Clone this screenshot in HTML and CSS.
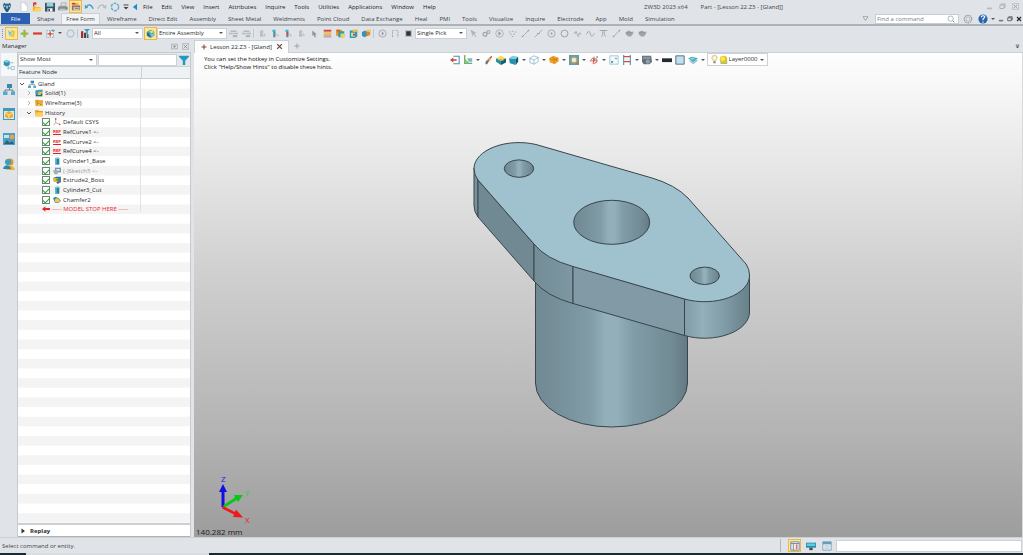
FILE: index.html
```html
<!DOCTYPE html>
<html lang="en">
<head>
<meta charset="utf-8">
<title>ZW3D 2023 x64 - Part - [Lesson 22.Z3 - [Gland]]</title>
<link rel="stylesheet" href="styles.css">
</head>
<body>
<svg class="defs" aria-hidden="true">
  <symbol id="logo" viewBox="0 0 12 12"><path d="M1 3l2-2 2 2 1-2 1 2 2-2 2 2-1 4-3 5H5L2 7z" fill="#245a78"/><path d="M2 3l2 2-2 1M10 3L8 5l2 1M5 5h2L6 8z" stroke="#bfe0ee" fill="#5aa5c4" stroke-width=".8"/></symbol>
  <symbol id="new" viewBox="0 0 12 12"><path d="M2.500 .5h5l2.500 3v8h-7.500z" fill="#fff" stroke="#b9bfc4" stroke-width=".7"/><path d="M7.500 .5v3H10" fill="none" stroke="#b9bfc4" stroke-width=".7"/></symbol>
  <symbol id="open" viewBox="0 0 12 12"><path d="M1 5h3l1 1h5v5H1z" fill="#f3b52c"/><path d="M2 11l2-4h8l-2 4z" fill="#ffd35c"/><path d="M2 5V2h3" stroke="#d23c2c" stroke-width="1.600" fill="none"/><path d="M1 1l4-1v4z" fill="#d23c2c"/></symbol>
  <symbol id="save" viewBox="0 0 12 12"><path d="M0 1h12v10.500H0z" fill="#38535f"/><path d="M2 1h8v4.500H2z" fill="#8fd0e2"/><path d="M3 7.500h6v4H3z" fill="#f4f7f8"/><path d="M4 8h2v3H4z" fill="#38535f"/></symbol>
  <symbol id="print" viewBox="0 0 12 12"><path d="M4 1h6l-1 4H3z" fill="#ddd" stroke="#888" stroke-width=".6"/><path d="M1 5h10l1 3-2 2H0V7z" fill="#858b90"/><path d="M2 8h7v2.500H2z" fill="#c3c7ca"/></symbol>
  <symbol id="saveall" viewBox="0 0 12 12"><path d="M1 4h10v6H1z" fill="#8f7468"/><path d="M3 1h6v3H3z" fill="#e8b04a"/><path d="M1 1h4v2H1z" fill="#d7392f"/><path d="M3 6h7v4H3z" fill="#d4c4b0"/><path d="M5 7h4v1H5z" fill="#7b5a50"/></symbol>
  <symbol id="undo" viewBox="0 0 12 12"><path d="M3 6c2-4 6-3 8 2" fill="none" stroke="#35a3c4" stroke-width="1.600"/><path d="M1 8V3l4 4z" fill="#35a3c4"/></symbol>
  <symbol id="redo" viewBox="0 0 12 12"><path d="M9 6C7 2 3 3 1 8" fill="none" stroke="#b4babf" stroke-width="1.500"/><path d="M11 8V3L7 7z" fill="#b4babf"/></symbol>
  <symbol id="ring" viewBox="0 0 12 12"><circle cx="6" cy="6" r="4.400" fill="none" stroke="#65aeca" stroke-width="1.800" stroke-dasharray="3.400 1.200"/></symbol>
  <symbol id="ring2" viewBox="0 0 12 12"><path d="M3.500 1.500h5L11 6l-2.500 4.500h-5L1 6z" fill="none" stroke="#8db9cc" stroke-width="1.200"/></symbol>
  <symbol id="tri" viewBox="0 0 12 12"><path d="M8.500 2v8L3.500 6z" fill="#168fca"/></symbol>
  <symbol id="drop" viewBox="0 0 12 12"><path d="M3 3h6v1.200H3zM3 6h6L6 9z" fill="#444"/></symbol>
  <symbol id="cursor" viewBox="0 0 12 12"><path d="M6 1l5 2-2 8-5-1z" fill="#e9c92d"/><path d="M1 1l7 5-3 1-2 4z" fill="#6fc0d2" stroke="#e9f5f8" stroke-width=".6"/></symbol>
  <symbol id="plus" viewBox="0 0 12 12"><path d="M4.500 1h3v3.500H11v3H7.500V11h-3V7.500H1v-3h3.500z" fill="#94b93a"/></symbol>
  <symbol id="minus" viewBox="0 0 12 12"><path d="M0 4.500h12v3H0z" fill="#d8402f"/></symbol>
  <symbol id="pickbox" viewBox="0 0 12 12"><path d="M1 2h9v9H1z" fill="#eef4f7" stroke="#6696a8" stroke-width=".9" stroke-dasharray="2 1"/><path d="M5.500 3v7M2 6.500h7" stroke="#d8402f" stroke-width="1.600"/><path d="M9 0v4M7 2h5" stroke="#4aa5c0"/></symbol>
  <symbol id="filterbars" viewBox="0 0 12 12"><path d="M0 3h3v9H0z" fill="#a4302d"/><path d="M4 5h3v7H4z" fill="#4c4242"/><path d="M8 7h2v5H8z" fill="#28786f"/><path d="M4 0h8L9 3v4L7 6V3z" fill="#349cc1"/></symbol>
  <symbol id="assembly" viewBox="0 0 12 12"><path d="M1 4l5-3 5 2v6l-5 3-5-3z" fill="#3aa2bd"/><path d="M4 3l4-1 3 2-4 2z" fill="#f5dc52"/><path d="M1 5l5 2v4L2 9z" fill="#176a88"/><path d="M4 7h5l1-2 2 3-3 3z" fill="#8bc5d0"/></symbol>
  <symbol id="gclip" viewBox="0 0 12 12"><path d="M2 2h8v2H2zM0 5h5v2H0zM6 5h6v2H6zM5 8h6v3H5z" fill="#b4b9bd"/></symbol>
  <symbol id="gbox" viewBox="0 0 12 12"><path d="M3 2h4v8H3z" fill="#b0b5b8"/><path d="M5 3h1v5H5z" fill="#d9dddf"/><path d="M8 5l3 4-3 1z" fill="#c3c7ca"/></symbol>
  <symbol id="bbox" viewBox="0 0 12 12"><path d="M2 1h4v3H2z" fill="#3bb2cc"/><path d="M3 4h3v7H3z" fill="#4d93a4"/><path d="M7 5l4 4-3 1z" fill="#bdc3c6"/></symbol>
  <symbol id="rbox" viewBox="0 0 12 12"><path d="M2 1h4v3H2z" fill="#3bb2cc"/><path d="M3 4h3v4H3z" fill="#c4504a"/><path d="M3 8h3v3H3z" fill="#4d93a4"/><path d="M7 5l4 4-3 1z" fill="#bdc3c6"/></symbol>
  <symbol id="garrow" viewBox="0 0 12 12"><path d="M3 2l6 5-2 .5L8 11l-2 0-1-3-2 1z" fill="#92979b"/></symbol>
  <symbol id="list" viewBox="0 0 12 12"><path d="M1 1h10v2.500H1z" fill="#d24533"/><path d="M1 4h10v2.500H1z" fill="#edc34a"/><path d="M1 8h10M1 10.500h10" stroke="#bc5e4b"/></symbol>
  <symbol id="copy" viewBox="0 0 12 12"><path d="M0 1h8v8H0z" fill="#e89b21"/><path d="M3 3h8v8H3z" fill="#2f9ab4"/><path d="M6 6h5v5H6z" fill="#f2d356"/><path d="M1 1h4v2H1z" fill="#d34b37"/></symbol>
  <symbol id="boxred" viewBox="0 0 12 12"><path d="M1 2h7l3-1v9l-3 2H1z" fill="#2e9cae"/><path d="M3 5h5v5H3z" fill="#f4e7c8"/><path d="M5 1h6v3H5z" fill="#e6b939"/><path d="M5 6h3v3H5z" fill="#d44c33"/></symbol>
  <symbol id="cubes" viewBox="0 0 12 12"><path d="M0 4l4-2 3 2v5l-4 2-3-2z" fill="#3595aa"/><path d="M6 2l5-1v7l-5 2z" fill="#e78630"/><path d="M7 1h4v3H7z" fill="#f1c551"/></symbol>
  <symbol id="gtarget" viewBox="0 0 12 12"><circle cx="6" cy="6" r="4.800" fill="none" stroke="#969b9f"/><path d="M5 3v6l3-3z" fill="#969b9f"/></symbol>
  <symbol id="ghook" viewBox="0 0 12 12"><path d="M2 11V2h2M6 2c4-1 4 2 3 4v5" fill="none" stroke="#a3a8ac" stroke-width="1.200" stroke-dasharray="3 .8"/></symbol>
  <symbol id="dark" viewBox="0 0 12 12"><path d="M1.500 1.500h9v9h-9z" fill="#b6babc"/><path d="M3 3h6v6H3z" fill="#333"/></symbol>
  <symbol id="gcursor" viewBox="0 0 12 12"><path d="M2 1l3 9 1-3 3 4 1-1-3-4 3-1z" fill="#b0b4b7"/></symbol>
  <symbol id="glink" viewBox="0 0 12 12"><circle cx="4" cy="7" r="2.500" fill="none" stroke="#a3a7aa" stroke-width="1.800"/><circle cx="8.500" cy="4" r="2" fill="none" stroke="#a3a7aa" stroke-width="1.500"/></symbol>
  <symbol id="gplay" viewBox="0 0 12 12"><circle cx="6" cy="6" r="5" fill="none" stroke="#a3a7aa"/><path d="M4.500 3v6l4-3z" fill="#989ca0"/></symbol>
  <symbol id="gdots" viewBox="0 0 12 12"><path d="M1 4h2M5 3h2M9 4h2M3 7h2M7 7h2M5 10h2" stroke="#9fa4a7" stroke-width="1.600"/></symbol>
  <symbol id="gline" viewBox="0 0 12 12"><path d="M2 10l8-8" stroke="#9b9fa2"/><path d="M9 1h2v2H9zM1 9h2v2H1z" fill="#9b9fa2"/></symbol>
  <symbol id="gmid" viewBox="0 0 12 12"><path d="M1 11L11 1M4 6h4" stroke="#9b9fa2"/></symbol>
  <symbol id="gcenter" viewBox="0 0 12 12"><circle cx="6" cy="6" r="4.800" fill="none" stroke="#969b9f"/><circle cx="6" cy="6" r="1.400" fill="#969b9f"/></symbol>
  <symbol id="gcircle" viewBox="0 0 12 12"><circle cx="6" cy="6" r="4.600" fill="none" stroke="#969b9f" stroke-width="1.200"/></symbol>
  <symbol id="gzig" viewBox="0 0 12 12"><path d="M1 5l2 1 1-3 3 7 2-5 2 2" fill="none" stroke="#999ea2"/></symbol>
  <symbol id="gwave" viewBox="0 0 12 12"><path d="M1 7c2-6 4-4 5 0s3 3 5-1" fill="none" stroke="#999ea2" stroke-width="1.200"/></symbol>
  <symbol id="gtan" viewBox="0 0 12 12"><path d="M1 2h10M3 10c2-1 2-3 2-7M9 10C7 9 7 7 7 3" fill="none" stroke="#999ea2" stroke-width="1.200"/></symbol>
  <symbol id="gpot" viewBox="0 0 12 12"><path d="M1 4l4-2 4 2 2-1 0 3-3 4H4L1 7z" fill="#a2a6a9"/><path d="M1 5h8" stroke="#888d91"/></symbol>
  <symbol id="exit" viewBox="0 0 12 12"><path d="M4 1.500h7v9H4" fill="none" stroke="#4a93b4" stroke-width="1.300"/><path d="M0 6l4-3v2h4v2H4v2z" fill="#c8453b"/></symbol>
  <symbol id="axes" viewBox="0 0 12 12"><path d="M2 1v9h9" fill="none" stroke="#6aad67" stroke-width="1.600"/><path d="M2 4l6 6H2z" fill="#8cc77a"/><path d="M5 4h6v4H7z" fill="#76bac8"/><path d="M1 0h2v2H1z" fill="#c7a42d"/></symbol>
  <symbol id="brush" viewBox="0 0 12 12"><path d="M10 1l1 1-4 6-2-2z" fill="#c65139"/><path d="M5 6l2 2-2 3-2 0 0-3z" fill="#6b747b"/><path d="M8 3l2 2-2 2-2-1z" fill="#efb25d"/></symbol>
  <symbol id="ybox" viewBox="0 0 12 12"><path d="M0 4l6-3 6 3-6 3z" fill="#f5dc5d"/><path d="M0 4l6 3v5L0 8z" fill="#268fae"/><path d="M6 7l6-3v5l-6 3z" fill="#135e7a"/><path d="M4 5h5v2H5z" fill="#e5ad22"/></symbol>
  <symbol id="bcube" viewBox="0 0 12 12"><path d="M0 4l4-3 7 1L8 5z" fill="#7bd1e2"/><path d="M0 4l8 1v7L1 10z" fill="#2591ad"/><path d="M8 5l3-3v6l-3 4z" fill="#125573"/></symbol>
  <symbol id="wcube" viewBox="0 0 12 12"><path d="M1 4l5-3 5 2v5L6 11 1 9zM1 4l5 2 5-3M6 6v5" fill="#fff" stroke="#79a8ba" stroke-width=".8"/></symbol>
  <symbol id="ocube" viewBox="0 0 12 12"><path d="M0 4l5-3 6 2 1 4-5 4-6-2z" fill="#f3a52b"/><path d="M1 5l5 1 5-2M6 6v4M3 3l5 2M9 5v3" stroke="#bd6d16" stroke-width=".8" fill="none"/></symbol>
  <symbol id="zoom" viewBox="0 0 12 12"><path d="M0 0h12v12H0z" fill="#52a1b5"/><circle cx="6" cy="6" r="3.500" fill="#d9eef2" stroke="#dd9a3e" stroke-width="1.500"/><path d="M9 9l3 3" stroke="#b97b37" stroke-width="1.600"/></symbol>
  <symbol id="rtarget" viewBox="0 0 12 12"><path d="M2 6a4 3 0 1 1 4 4M1 7h9M6 2l-1 9" fill="none" stroke="#d05a50" stroke-width="1.100"/><path d="M5 4l3 2-3 2z" fill="#d05a50"/><path d="M9 1l2 1-2 3z" fill="#5699ab"/></symbol>
  <symbol id="fit" viewBox="0 0 12 12"><path d="M1 1h10v10H1z" fill="#f4fafc" stroke="#8dbccd" stroke-width=".9"/><path d="M3 9l2-2M7 4h2v1M3 7v2h2" stroke="#478ba4" fill="none"/></symbol>
  <symbol id="section" viewBox="0 0 12 12"><path d="M2 0v12M10 0v12" stroke="#5499b4" stroke-width="1.400"/><path d="M2 2h8M2 8h8" stroke="#c45349" stroke-width="1.400"/><path d="M3 4h6v2H3z" fill="#e5f1f6"/></symbol>
  <symbol id="render" viewBox="0 0 12 12"><path d="M0 1h11l1 7-3 3H2L0 8z" fill="#606f7b"/><path d="M1 2h9v3H1z" fill="#8a939a"/><circle cx="7" cy="8" r="2.500" fill="#8fa1ae"/></symbol>
  <symbol id="bar" viewBox="0 0 12 12"><path d="M0 4h12v4.500H0z" fill="#202a2f"/></symbol>
  <symbol id="face" viewBox="0 0 12 12"><path d="M1 1h10v10H1z" fill="#c1e1f0" stroke="#415966"/></symbol>
  <symbol id="layers" viewBox="0 0 12 12"><path d="M1 7l5 4 6-4-2-2z" fill="#9fc6d2"/><path d="M0 4l5-2 7 2-6 4z" fill="#49aabf"/><path d="M2 4l4-1 3 1-4 2z" fill="#85d2de"/></symbol>
  <symbol id="bulb" viewBox="0 0 12 12"><path d="M4.500 8C4 6 2.500 5.500 2.500 3.600a3.500 3.100 0 0 1 7 0C9.500 5.500 8 6 7.500 8z" fill="#fff4c4" stroke="#bc9b57" stroke-width=".8"/><path d="M4.500 8.500h3V11h-3z" fill="#777c80"/></symbol>
  <symbol id="layerball" viewBox="0 0 12 12"><path d="M2 8h9v4H2z" fill="#a6b4a1"/><circle cx="6" cy="6" r="5" fill="#dfc624"/><circle cx="5" cy="5" r="3" fill="#f5e75b"/></symbol>
  <symbol id="tree" viewBox="0 0 12 12"><path d="M4 1h5v4H4z" fill="#3489ad"/><path d="M6.500 5v2M2 9V7h8v2" stroke="#5f808e" fill="none"/><path d="M0 8.500h4.500V12H0zM8 8.500h4V12H8z" fill="#54aaca"/></symbol>
  <symbol id="mgr" viewBox="0 0 16 16"><path d="M1 3l4-2 4 2v5L5 10 1 8z" fill="#3093b2"/><path d="M1 3l4 2 4-2-4-2z" fill="#86d0df"/><path d="M9 5h5M6 12h5M7 9v5" stroke="#7badc0"/><path d="M11 10h4v4h-4z" fill="#fff" stroke="#83b0c1"/></symbol>
  <symbol id="parts" viewBox="0 0 12 12"><path d="M0 0h12v12H0z" fill="#3d9abd"/><path d="M1 3h10v8H1z" fill="#d5edf4"/><path d="M2 5l4-2 4 2v4l-4 2-4-2z" fill="#f1ac2f"/><path d="M2 5l4 2 4-2M6 7v4" stroke="#ffe899" fill="none"/></symbol>
  <symbol id="visual" viewBox="0 0 12 12"><path d="M0 0h12v12H0z" fill="#4c9fc2"/><path d="M1 11l3-4 3 3 2-2 2 3z" fill="#315d75"/><circle cx="9" cy="4" r="2.300" fill="#f1a33a"/><path d="M1 2h5v3H1z" fill="#c5e3ec"/></symbol>
  <symbol id="user" viewBox="0 0 12 12"><circle cx="7" cy="4" r="3.500" fill="#d59b27"/><path d="M3 12c0-6 8-6 9 0z" fill="#eab536"/><circle cx="5" cy="4" r="3" fill="#3b9cc4"/><path d="M0 11c1-5 7-5 8 0z" fill="#2787b1"/></symbol>
  <symbol id="solid" viewBox="0 0 12 12"><path d="M1 2h10v9H1z" fill="#216b88"/><path d="M0 5l5-4h7l-4 5-5 3z" fill="#3ca1bb"/><path d="M6 4h6L8 9H4z" fill="#f2c043"/></symbol>
  <symbol id="wire" viewBox="0 0 12 12"><path d="M0 1h5l1 1h6v9H1z" fill="#e9a526"/><path d="M3 5h8v5H3z" fill="#ffd863"/><path d="M4 9V5l5 4V5" fill="none" stroke="#8f5220"/></symbol>
  <symbol id="folder" viewBox="0 0 12 12"><path d="M0 2h5l1 1h6v8H1z" fill="#e79b20"/><path d="M2 5h10v6H1z" fill="#ffce54"/></symbol>
  <symbol id="csys" viewBox="0 0 12 12"><path d="M4 1v6l7 3M4 7l-3 4" fill="none" stroke="#999" stroke-width="1.100"/><path d="M3 0h2v3H3zM9 8l3 2-3 1z" fill="#d86055"/></symbol>
  <symbol id="cyl" viewBox="0 0 12 12"><path d="M3.500 1.500h6v10h-6z" fill="#2384a3"/><path d="M3.500 1.500h2v10h-2z" fill="#5cbfd3"/><ellipse cx="6.500" cy="1.700" rx="3" ry="1.200" fill="#89cedb"/></symbol>
  <symbol id="sketch" viewBox="0 0 12 12"><path d="M3 1h9v7H3z" fill="#7597a7"/><path d="M5 3h5v3H5z" fill="#dce9ed"/><path d="M0 5h7v6H2z" fill="#9db3bb"/></symbol>
  <symbol id="extrude" viewBox="0 0 12 12"><path d="M0 3l5-2h7v8l-5 3z" fill="#237795"/><path d="M0 3h8v6H1z" fill="#e9b331"/><path d="M4 4h5l3-3v6l-3 4z" fill="#358ca4"/><path d="M8 8l3-1v3z" fill="#d6534b"/></symbol>
  <symbol id="chamfer" viewBox="0 0 12 12"><path d="M0 3l4-2 4 2 4 4-4 4-5-1z" fill="#2c91ae"/><path d="M3 5l3-2 5 4-3 3-5-1z" fill="#f6c843"/></symbol>
  <symbol id="stop" viewBox="0 0 12 12"><path d="M0 6l5-4v2.500h7v3H5V10z" fill="#e8242b"/></symbol>
  <symbol id="funnel" viewBox="0 0 12 12"><path d="M0 1h12v1L7.500 7v5h-3V7L0 2z" fill="#239bc0"/></symbol>
  <symbol id="search" viewBox="0 0 12 12"><circle cx="5.500" cy="5.500" r="4" fill="none" stroke="#87979f"/><path d="M8.500 8.500L11 11" stroke="#489bbb" stroke-width="1.500"/></symbol>
  <symbol id="gear" viewBox="0 0 12 12"><circle cx="6" cy="6" r="4.500" fill="#e4e7e9" stroke="#999ea2" stroke-width="1.500" stroke-dasharray="2 .8"/><circle cx="6" cy="6" r="2.500" fill="none" stroke="#999ea2" stroke-width=".7"/></symbol>
  <symbol id="help" viewBox="0 0 12 12"><circle cx="6" cy="6" r="5.500" fill="#2464b0"/><path d="M4 4c0-3 5-2 4 0L6 6v1.500M6 9v1.500" stroke="#fff" stroke-width="1.400" fill="none"/></symbol>
  <symbol id="min" viewBox="0 0 12 12"><path d="M2.500 8.500h7v1.500h-7z" fill="none" stroke="currentColor"/></symbol>
  <symbol id="restore" viewBox="0 0 12 12"><path d="M3.500 3V1.500h7v6H9M1.500 3.500h7v6h-7z" fill="none" stroke="currentColor" stroke-width="1.200"/></symbol>
  <symbol id="close" viewBox="0 0 12 12"><path d="M1 1h10v10H1z" fill="none" stroke="currentColor" stroke-width=".8"/><path d="M3 3l6 6M9 3L3 9" stroke="currentColor" stroke-width="1.600"/></symbol>
  <symbol id="x" viewBox="0 0 12 12"><path d="M2 2l8 8M10 2l-8 8" stroke="currentColor" stroke-width="2.200"/></symbol>
  <symbol id="add" viewBox="0 0 12 12"><path d="M6 1v10M1 6h10" stroke="currentColor" stroke-width="2"/></symbol>
  <symbol id="pin" viewBox="0 0 12 12"><path d="M1 2h10v8H1z" fill="none" stroke="currentColor"/><circle cx="6" cy="6" r="2" fill="currentColor"/></symbol>
  <symbol id="tridown" viewBox="0 0 12 12"><path d="M2 3h8L6 9z" fill="#fff" stroke="#777" stroke-width="1.200"/></symbol>
  <symbol id="open-node" viewBox="0 0 12 12"><path d="M2 4l4 4 4-4" fill="none" stroke="#444" stroke-width="1.800"/></symbol>
  <symbol id="closed-node" viewBox="0 0 12 12"><path d="M4 2l4 4-4 4" fill="none" stroke="#888" stroke-width="1.300"/></symbol>
  <symbol id="play" viewBox="0 0 12 12"><path d="M3 1v10l7-5z" fill="#333"/></symbol>
  <symbol id="sb1" viewBox="0 0 12 12"><path d="M1 1h10v10H1z" fill="#eef2f5" stroke="#6a7f91"/><path d="M1 3h10M4 3v8" stroke="#6a7f91"/><path d="M7 4h2v6H7z" fill="#d77a76"/></symbol>
  <symbol id="sb2" viewBox="0 0 12 12"><path d="M0 2h12v6H0z" fill="#2c8bab"/><path d="M1 3h10v3H1z" fill="#59cede"/><path d="M4 8h4v3H4z" fill="#40505c"/></symbol>
  <symbol id="sb3" viewBox="0 0 12 12"><path d="M1 1h10v10H1z" fill="#eaf2f7" stroke="#6b9cba"/><path d="M1 1h10v3H1z" fill="#6b9cba"/><path d="M3 6h6M3 8.500h6" stroke="#a1b8c5"/></symbol>
</svg>

<div class="app">
  <header class="title-row">
    <div class="quick">
      <button class="tool" aria-label="ZW3D"><svg><use href="#logo"/></svg></button>
      <i class="gap"></i>
      <button class="tool" aria-label="New"><svg><use href="#new"/></svg></button>
      <button class="tool" aria-label="Open"><svg><use href="#open"/></svg></button>
      <button class="tool" aria-label="Save"><svg><use href="#save"/></svg></button>
      <button class="tool" aria-label="Print"><svg><use href="#print"/></svg></button>
      <button class="tool on" aria-label="Save all"><svg><use href="#saveall"/></svg></button>
      <button class="tool" aria-label="Undo"><svg><use href="#undo"/></svg></button>
      <button class="tool" aria-label="Redo"><svg><use href="#redo"/></svg></button>
      <button class="tool" aria-label="Regenerate"><svg><use href="#ring"/></svg></button>
      <button class="tool slim" aria-label="Customize"><svg><use href="#drop"/></svg></button>
      <button class="tool slim" aria-label="Collapse menu"><svg><use href="#tri"/></svg></button>
    </div>
    <nav class="menu">
      <a href="#">File</a><a href="#">Edit</a><a href="#">View</a><a href="#">Insert</a><a href="#">Attributes</a><a href="#">Inquire</a><a href="#">Tools</a><a href="#">Utilities</a><a href="#">Applications</a><a href="#">Window</a><a href="#">Help</a>
    </nav>
    <div class="caption"><span>ZW3D 2023 x64</span><span>Part - [Lesson 22.Z3 - [Gland]]</span></div>
    <div class="window-buttons">
      <button class="tool" aria-label="Minimize"><svg><use href="#min"/></svg></button>
      <button class="tool" aria-label="Restore"><svg><use href="#restore"/></svg></button>
      <button class="tool" aria-label="Close"><svg><use href="#close"/></svg></button>
    </div>
  </header>

  <div class="ribbon-row">
    <nav class="ribbon">
      <a class="file" href="#">File</a><a href="#">Shape</a><a class="active" href="#">Free Form</a><a href="#">Wireframe</a><a href="#">Direct Edit</a><a href="#">Assembly</a><a href="#">Sheet Metal</a><a href="#">Weldments</a><a href="#">Point Cloud</a><a href="#">Data Exchange</a><a href="#">Heal</a><a href="#">PMI</a><a href="#">Tools</a><a href="#">Visualize</a><a href="#">Inquire</a><a href="#">Electrode</a><a href="#">App</a><a href="#">Mold</a><a href="#">Simulation</a>
    </nav>
    <div class="ribbon-end">
      <button class="tool small" aria-label="Ribbon options"><svg><use href="#tridown"/></svg></button>
      <label class="search"><input type="text" placeholder="Find a command" aria-label="Find a command"><svg><use href="#search"/></svg></label>
      <button class="tool" aria-label="Settings"><svg><use href="#gear"/></svg></button>
      <button class="tool help" aria-label="Help"><svg><use href="#help"/></svg><i class="caret"></i></button>
      <button class="tool tiny" aria-label="Minimize document"><svg><use href="#min"/></svg></button>
      <button class="tool tiny" aria-label="Restore document"><svg><use href="#restore"/></svg></button>
      <button class="tool tiny" aria-label="Close document"><svg><use href="#x"/></svg></button>
    </div>
  </div>

  <div class="toolbar">
    <i class="grip"></i>
    <button class="tool on" aria-label="Pick"><svg><use href="#cursor"/></svg></button>
    <button class="tool" aria-label="Add pick"><svg><use href="#plus"/></svg></button>
    <button class="tool" aria-label="Remove pick"><svg><use href="#minus"/></svg></button>
    <button class="tool menu-tool" aria-label="Pick box"><svg><use href="#pickbox"/></svg><i class="caret"></i></button>
    <button class="tool" aria-label="Pick region"><svg><use href="#ring2"/></svg></button>
    <i class="sep thin"></i>
    <button class="tool" aria-label="Filter"><svg><use href="#filterbars"/></svg></button>
    <span class="combo filter"><select aria-label="Filter type"><option>All</option></select></span>
    <button class="tool on spaced" aria-label="Assembly scope"><svg><use href="#assembly"/></svg></button>
    <span class="combo scope"><select aria-label="Scope"><option>Entire Assembly</option></select></span>
    <button class="tool" aria-label="Clip"><svg><use href="#gclip"/></svg></button>
    <button class="tool" aria-label="Align"><svg><use href="#gclip"/></svg></button>
    <i class="sep"></i>
    <button class="tool" aria-label="Hide"><svg><use href="#gbox"/></svg></button>
    <button class="tool" aria-label="Show"><svg><use href="#bbox"/></svg></button>
    <button class="tool" aria-label="Show only"><svg><use href="#rbox"/></svg></button>
    <button class="tool" aria-label="Swap"><svg><use href="#gbox"/></svg></button>
    <button class="tool" aria-label="Select"><svg><use href="#garrow"/></svg></button>
    <button class="tool" aria-label="Pick list"><svg><use href="#list"/></svg></button>
    <button class="tool" aria-label="Copy"><svg><use href="#copy"/></svg></button>
    <button class="tool" aria-label="Replace"><svg><use href="#boxred"/></svg></button>
    <button class="tool" aria-label="Components"><svg><use href="#cubes"/></svg></button>
    <i class="sep"></i>
    <button class="tool" aria-label="History"><svg><use href="#gtarget"/></svg></button>
    <button class="tool" aria-label="Chain"><svg><use href="#ghook"/></svg></button>
    <button class="tool" aria-label="Stop"><svg><use href="#dark"/></svg></button>
    <span class="combo pick"><select aria-label="Pick mode"><option>Single Pick</option></select></span>
    <button class="tool" aria-label="Cursor"><svg><use href="#gcursor"/></svg></button>
    <button class="tool" aria-label="Link"><svg><use href="#glink"/></svg></button>
    <button class="tool" aria-label="Play"><svg><use href="#gplay"/></svg></button>
    <button class="tool" aria-label="Points"><svg><use href="#gdots"/></svg></button>
    <button class="tool" aria-label="End point"><svg><use href="#gline"/></svg></button>
    <button class="tool" aria-label="Mid point"><svg><use href="#gmid"/></svg></button>
    <button class="tool" aria-label="Center"><svg><use href="#gcenter"/></svg></button>
    <button class="tool" aria-label="Quadrant"><svg><use href="#gcircle"/></svg></button>
    <button class="tool" aria-label="Intersection"><svg><use href="#gzig"/></svg></button>
    <button class="tool" aria-label="Curve"><svg><use href="#gwave"/></svg></button>
    <button class="tool" aria-label="Tangent"><svg><use href="#gtan"/></svg></button>
    <button class="tool" aria-label="Line"><svg><use href="#gline"/></svg></button>
    <button class="tool" aria-label="Surface"><svg><use href="#gpot"/></svg></button>
    <button class="tool" aria-label="Face"><svg><use href="#gpot"/></svg></button>
  </div>

  <main class="work">
    <aside class="manager">
      <div class="manager-head"><span>Manager</span>
        <button class="tool small" aria-label="Pin"><svg><use href="#pin"/></svg></button>
        <button class="tool small" aria-label="Close manager"><svg><use href="#close"/></svg></button>
      </div>
      <div class="manager-body">
        <nav class="side">
          <button class="active" aria-label="History manager"><svg><use href="#mgr"/></svg></button>
          <button aria-label="Assembly manager"><svg><use href="#tree"/></svg></button>
          <button aria-label="View manager"><svg><use href="#parts"/></svg></button>
          <button aria-label="Visual manager"><svg><use href="#visual"/></svg></button>
          <button aria-label="Role manager"><svg><use href="#user"/></svg></button>
        </nav>
        <section class="panel">
          <div class="filters">
            <span class="combo show"><select aria-label="Show"><option>Show Most</option></select></span>
            <input type="text" aria-label="Filter nodes">
            <button class="tool" aria-label="Filter"><svg><use href="#funnel"/></svg></button>
          </div>
          <div class="columns"><span>Feature Node</span><span></span></div>
          <ul class="nodes">
            <li><svg class="twist"><use href="#open-node"/></svg><svg><use href="#tree"/></svg>Gland</li>
            <li class="l1"><svg class="twist"><use href="#closed-node"/></svg><svg><use href="#solid"/></svg>Solid(1)</li>
            <li class="l1"><svg class="twist"><use href="#closed-node"/></svg><svg><use href="#wire"/></svg>Wireframe(3)</li>
            <li class="l1"><svg class="twist"><use href="#open-node"/></svg><svg><use href="#folder"/></svg>History</li>
            <li class="l2"><label><input type="checkbox" checked><svg><use href="#csys"/></svg>Default CSYS</label></li>
            <li class="l2"><label><input type="checkbox" checked><b class="ref">REF</b>RefCurve1 &lt;-</label></li>
            <li class="l2"><label><input type="checkbox" checked><b class="ref">REF</b>RefCurve2 &lt;-</label></li>
            <li class="l2"><label><input type="checkbox" checked><b class="ref">REF</b>RefCurve4 &lt;-</label></li>
            <li class="l2"><label><input type="checkbox" checked><svg><use href="#cyl"/></svg>Cylinder1_Base</label></li>
            <li class="l2 muted"><label><input type="checkbox" checked><svg><use href="#sketch"/></svg>(-)Sketch5 &lt;-</label></li>
            <li class="l2"><label><input type="checkbox" checked><svg><use href="#extrude"/></svg>Extrude2_Boss</label></li>
            <li class="l2"><label><input type="checkbox" checked><svg><use href="#cyl"/></svg>Cylinder3_Cut</label></li>
            <li class="l2"><label><input type="checkbox" checked><svg><use href="#chamfer"/></svg>Chamfer2</label></li>
            <li class="l2 stop"><svg><use href="#stop"/></svg>----- MODEL STOP HERE -----</li>
          </ul>
          <button class="replay"><svg><use href="#play"/></svg>Replay</button>
        </section>
      </div>
    </aside>

    <section class="document">
      <div class="doc-tabs">
        <div class="doc-tab"><svg class="mark"><use href="#add"/></svg><span>Lesson 22.Z3 - [Gland]</span><button class="tool small" aria-label="Close tab"><svg><use href="#x"/></svg></button></div>
        <button class="tool new-tab" aria-label="New tab"><svg><use href="#add"/></svg></button>
        <button class="tool small tab-list" aria-label="Tab list"><svg><use href="#drop"/></svg></button>
      </div>
      <div class="view">
        <svg class="scene" viewBox="194 53 828 484" role="img" aria-label="Gland model">
          <defs>
            <linearGradient id="barrel"><stop offset="0" stop-color="#718993"/><stop offset=".1" stop-color="#748d97"/><stop offset=".36" stop-color="#809ca7"/><stop offset=".46" stop-color="#93afba"/><stop offset=".54" stop-color="#93afba"/><stop offset=".64" stop-color="#819da8"/><stop offset=".9" stop-color="#718a94"/><stop offset="1" stop-color="#637a83"/></linearGradient>
            <linearGradient id="end"><stop offset="0" stop-color="#819ca7"/><stop offset=".28" stop-color="#93b0bb"/><stop offset=".55" stop-color="#84a0ab"/><stop offset="1" stop-color="#678089"/></linearGradient>
            <linearGradient id="bend"><stop offset="0" stop-color="#738c96"/><stop offset="1" stop-color="#7d98a3"/></linearGradient>
          </defs>
          <g class="edges">
            <path d="M535.500 250V383A76 44 0 0 0 687.500 383V270z" fill="url(#barrel)"/>
            <path d="M474 168V205Q474 212 478 217V180z" fill="#7893a0"/>
            <path d="M478 180V217L534 281V244z" fill="#718993"/>
            <path d="M534 244V281Q546 296 573 303.500V266.500z" fill="url(#bend)"/>
            <path d="M573 266V303.500L684.500 335.500V299z" fill="#819aa5"/>
            <path d="M684.500 298V335.500A45 26 0 0 0 749.500 312V275z" fill="url(#end)"/>
            <path d="M474 168A45 26 0 0 1 536 144.500L652 178A87 50 0 0 1 688 198L746 264Q749.500 269 749.500 275A45 26 0 0 1 684.500 299L573 266.500Q546 259 534 244L478 180Q474 175 474 168z" fill="#a0c1ce"/>
            <ellipse cx="611.700" cy="222.300" rx="38" ry="22" fill="url(#barrel)"/>
            <ellipse cx="519" cy="168.600" rx="14.700" ry="8.700" fill="url(#barrel)"/>
            <ellipse cx="704.700" cy="275.800" rx="14.700" ry="8.700" fill="url(#barrel)"/>
          </g>
          <g class="triad">
            <path d="M221.500 507V492h-2.500L223 484l4 8h-2.500v15z" fill="#1010e0"/>
            <path d="M223 505.500l12-8-1-2.500 9 0-5 7-1.500-2-12.500 8z" fill="#08c816"/>
            <path d="M223 506l12 6 1-2.500 7 8-10-.5 1-2.500-12-6z" fill="#f01818"/>
            <text x="221" y="482" fill="#2222ee">Z</text><text x="245" y="496" fill="#20d030">Y</text><text x="245" y="523" fill="#e82020">X</text>
          </g>
        </svg>
        <p class="hints">You can set the hotkey in Customize Settings.<br>Click "Help/Show Hints" to disable these hints.</p>
        <div class="view-tools">
          <button class="tool" aria-label="Exit"><svg><use href="#exit"/></svg></button>
          <button class="tool menu-tool" aria-label="Csys"><svg><use href="#axes"/></svg><i class="caret"></i></button>
          <button class="tool" aria-label="Paint"><svg><use href="#brush"/></svg></button>
          <button class="tool" aria-label="View plane"><svg><use href="#ybox"/></svg></button>
          <button class="tool menu-tool" aria-label="Standard views"><svg><use href="#bcube"/></svg><i class="caret"></i></button>
          <button class="tool menu-tool" aria-label="Display mode"><svg><use href="#wcube"/></svg><i class="caret"></i></button>
          <button class="tool menu-tool" aria-label="Shape display"><svg><use href="#ocube"/></svg><i class="caret"></i></button>
          <button class="tool menu-tool" aria-label="Zoom"><svg><use href="#zoom"/></svg><i class="caret"></i></button>
          <button class="tool menu-tool" aria-label="Rotate"><svg><use href="#rtarget"/></svg><i class="caret"></i></button>
          <button class="tool" aria-label="Fit"><svg><use href="#fit"/></svg></button>
          <button class="tool menu-tool" aria-label="Section"><svg><use href="#section"/></svg><i class="caret"></i></button>
          <button class="tool menu-tool" aria-label="Render"><svg><use href="#render"/></svg><i class="caret"></i></button>
          <button class="tool" aria-label="Line width"><svg><use href="#bar"/></svg></button>
          <button class="tool" aria-label="Face color"><svg><use href="#face"/></svg></button>
          <button class="tool menu-tool" aria-label="Layers"><svg><use href="#layers"/></svg><i class="caret"></i></button>
          <span class="combo layer"><svg><use href="#bulb"/></svg><svg><use href="#layerball"/></svg><select aria-label="Layer"><option>Layer0000</option></select></span>
        </div>
        <output class="scale">140.282 mm</output>
      </div>
    </section>
  </main>

  <footer class="status">
    <span class="prompt">Select command or entity.</span>
    <div class="status-tools">
      <button class="tool on" aria-label="Manager"><svg><use href="#sb1"/></svg></button>
      <button class="tool" aria-label="Display"><svg><use href="#sb2"/></svg></button>
      <button class="tool" aria-label="Output"><svg><use href="#sb3"/></svg></button>
    </div>
    <input type="text" aria-label="Command input">
  </footer>
  <div class="taskbar"><i></i></div>
</div>
</body>
</html>
```
FILE: styles.css
```css
* { box-sizing: border-box; }
html, body { height: 100%; margin: 0; }
body { font: 6px/10px "Open Sans", "Noto Sans", sans-serif; color: #2c2c2c; background: #e0e4e8; overflow: hidden; }
button, input, select { font: inherit; color: inherit; margin: 0; padding: 0; border: 0; background: none; border-radius: 0; outline: 0; }
a { color: inherit; text-decoration: none; }
svg { display: block; flex: none; width: 10px; height: 10px; }
.defs { position: absolute; width: 0; height: 0; }

.app { height: 100vh; display: flex; flex-direction: column; }

.tool { width: 13px; height: 13px; flex: none; display: flex; align-items: center; justify-content: center; }
.tool.on { background: #fbe69b; border: 1px solid #e5b94f; }
.tool.slim { width: 9px; }
.tool.small { width: 11px; }
.tool.small svg { width: 7px; height: 7px; }
.tool.tiny { width: 9px; }
.tool.tiny svg { width: 6px; height: 6px; }
.tool.menu-tool, .tool.help { width: 20px; gap: 3px; }
.tool.spaced { margin-left: 1px; }
.caret { width: 0; height: 0; border: 2px solid transparent; border-top-color: #555; border-bottom: 0; }
.gap { width: 4px; }
.sep { width: 3px; height: 9px; flex: none; border-left: 1px solid #c3c8cc; }
.sep.thin { width: 2px; }

.title-row { height: 13px; flex: none; display: flex; align-items: center; color: #222; }
.quick { display: flex; align-items: center; }
.menu { display: flex; gap: 9px; margin-left: 4px; font-weight: 500; }
.caption { margin-left: auto; display: flex; gap: 13px; color: #444; }
.window-buttons { display: flex; margin-left: 200px; padding-right: 1px; color: #9ba1a6; }
.window-buttons svg { width: 7px; height: 7px; }

.ribbon-row { height: 13px; flex: none; display: flex; align-items: stretch; border-bottom: 2px solid #adb2b6; }
.ribbon { display: flex; padding-left: 1px; color: #404348; }
.ribbon a { padding: 1px 6px 0; white-space: nowrap; }
.ribbon .file { width: 29px; background: #2a5fb4; color: #fff; text-align: center; margin-right: 1px; }
.ribbon .active { background: #f1f3f4; border: 1px solid #cbd0d4; border-bottom: 0; padding: 0 4px; margin: 0 1px; }
.ribbon-end { margin-left: auto; display: flex; align-items: center; gap: 2px; color: #222; }
.search { display: flex; align-items: center; width: 84px; height: 10px; margin-left: 2px; padding: 0 3px 0 1px; background: #fff; border: 1px solid #c9ced2; }
.search input { flex: 1; min-width: 0; }
.search svg { width: 8px; height: 8px; }
.search input::placeholder { color: #7a7f83; opacity: 1; }
.ribbon-end .tool { height: 11px; }
.ribbon-end .tiny { margin-left: -2px; }

.toolbar { height: 14px; flex: none; display: flex; align-items: center; }
.grip { width: 1px; height: 9px; margin: 0 2px; border-left: 1px dotted #8b9196; }
.combo { position: relative; display: flex; align-items: center; height: 11px; background: #fff; border: 1px solid #ccd1d5; flex: none; }
.combo select { appearance: none; flex: 1; min-width: 0; padding-left: 1px; height: 9px; line-height: 9px; }
.combo::after { content: ""; width: 0; height: 0; margin-right: 3px; border: 2px solid transparent; border-top-color: #555; border-bottom: 0; }
.combo.filter { width: 51px; }
.combo.scope { width: 70px; }
.combo.pick { width: 52px; }
.toolbar svg { width: 9px; height: 9px; }

.work { flex: 1; min-height: 0; display: flex; }
.manager { width: 194px; flex: none; display: flex; flex-direction: column; }
.manager-head { height: 12px; flex: none; display: flex; align-items: center; padding: 0 3px 0 2px; }
.manager-head span { flex: 1; }
.manager-head .tool { color: #8c9297; }
.manager-body { flex: 1; min-height: 0; display: flex; padding-right: 3px; }
.side { width: 17px; flex: none; display: flex; flex-direction: column; padding-top: 1px; }
.side button { height: 25px; display: flex; align-items: center; justify-content: center; }
.side svg { width: 12px; height: 12px; }
.side .active { height: 23px; background: #f5f7f8; margin-left: 1px; }
.panel { flex: 1; min-width: 0; display: flex; flex-direction: column; border: 1px solid #c5cace; border-bottom: 0; background: #fff; }
.filters { height: 13px; flex: none; display: flex; align-items: center; gap: 1px; background: #e4e8eb; }
.combo.show { width: 79px; height: 12px; }
.filters input { flex: 1; min-width: 0; height: 12px; background: #fff; border: 1px solid #ccd1d5; }
.filters .tool { margin-left: -1px; }
.columns { height: 13px; flex: none; display: grid; grid-template-columns: 122px 1fr; align-items: stretch; background: #eff2f4; border-top: 1px solid #cdd2d6; border-bottom: 1px solid #c8cdd1; line-height: 11px; padding-left: 1px; }
.columns span + span { border-left: 1px solid #cdd2d6; }
.nodes { flex: 1; min-height: 0; margin: 0; padding: 0; list-style: none; display: grid; grid-template-rows: repeat(46, minmax(0, 1fr)); background-image: linear-gradient(90deg, transparent 122px, #e1e4e6 122px, #e1e4e6 123px, transparent 123px), linear-gradient(#fff 50%, #f4f4f4 50%); background-size: 100% 30%, 100% calc(100% / 23); background-repeat: no-repeat, repeat; }
.nodes li, .nodes label { display: flex; align-items: center; white-space: nowrap; }
.nodes svg { width: 8px; height: 8px; margin-right: 2px; }
.nodes .twist { width: 6px; height: 6px; margin: 0 3px 0 1px; }
.nodes .l1 { padding-left: 7px; }
.nodes .l2 { padding-left: 24px; }
.nodes input { appearance: none; width: 8px; height: 8px; margin-right: 3px; display: grid; place-items: center; background: #fff; border: 1px solid #6f8573; }
.nodes input:checked::before { content: ""; width: 5px; height: 3px; border: solid #2da33a; border-width: 0 0 1px 1px; transform: rotate(-45deg); }
.ref { width: 8px; margin-right: 2px; font: bold 4px/5px "Liberation Sans", sans-serif; text-align: center; color: #e01f25; border-bottom: 1px solid #e01f25; }
.nodes .muted { color: #999; }
.nodes .stop { color: #f02830; }
.replay { height: 14px; flex: none; display: flex; align-items: center; gap: 4px; padding-left: 2px; font-weight: 700; border-top: 2px solid #ccd0d4; border-bottom: 1px solid #aeb3b7; }
.replay svg { width: 6px; height: 6px; }

.document { flex: 1; min-width: 0; display: flex; flex-direction: column; }
.doc-tabs { height: 13px; flex: none; display: flex; align-items: center; border-bottom: 1px solid #cbd0d4; }
.doc-tab { display: flex; align-items: center; height: 13px; gap: 3px; padding: 0 3px 0 6px; background: #fbfcfc; border: 1px solid #cbd0d4; border-bottom: 0; }
.doc-tab .mark { width: 6px; height: 6px; color: #8c3a31; }
.doc-tab .tool { height: 11px; margin-left: -1px; color: #74443c; }
.new-tab { margin-left: 2px; color: #9ea3a7; }
.new-tab svg { width: 6px; height: 6px; }
.tab-list { margin-left: auto; }
.view { flex: 1; min-height: 0; position: relative; overflow: hidden; border-right: 1px solid #d7dadd; background: linear-gradient(#fefefe, #ededed 17%, #cfcfcf 46%, #b2b2b2 80%, #9d9d9d); }
.scene { position: absolute; inset: 0; width: 100%; height: 100%; }
.edges path, .edges ellipse { stroke: #38464c; stroke-width: 1px; stroke-linejoin: round; }
.triad text { font: 8px "Open Sans", sans-serif; }
.hints { position: absolute; left: 10px; top: 2px; margin: 0; line-height: 8px; color: #111; }
.view-tools { position: absolute; left: 0; right: 0; top: 0; display: flex; justify-content: center; align-items: center; }
.combo.layer { width: 61px; height: 13px; padding-left: 2px; }
.layer svg { width: 9px; height: 9px; }
.scale { position: absolute; left: 2px; bottom: 0; font: 8px/11px "Open Sans", sans-serif; color: #1c1c1c; }

.status { height: 16px; flex: none; display: flex; align-items: center; padding: 0 1px 0 2px; border-top: 1px solid #cdd1d4; }
.prompt { flex: 1; color: #444; }
.status-tools { display: flex; gap: 3px; padding: 0 3px 0 7px; border-left: 1px solid #b2b7bb; }
.status input { width: 186px; height: 12px; background: #fff; border: 1px solid #ccd1d5; }
.taskbar { height: 2px; flex: none; background: #1b2a31; }
.taskbar i { display: block; width: 183px; height: 2px; margin-left: 26px; background: #dadde0; }
```
